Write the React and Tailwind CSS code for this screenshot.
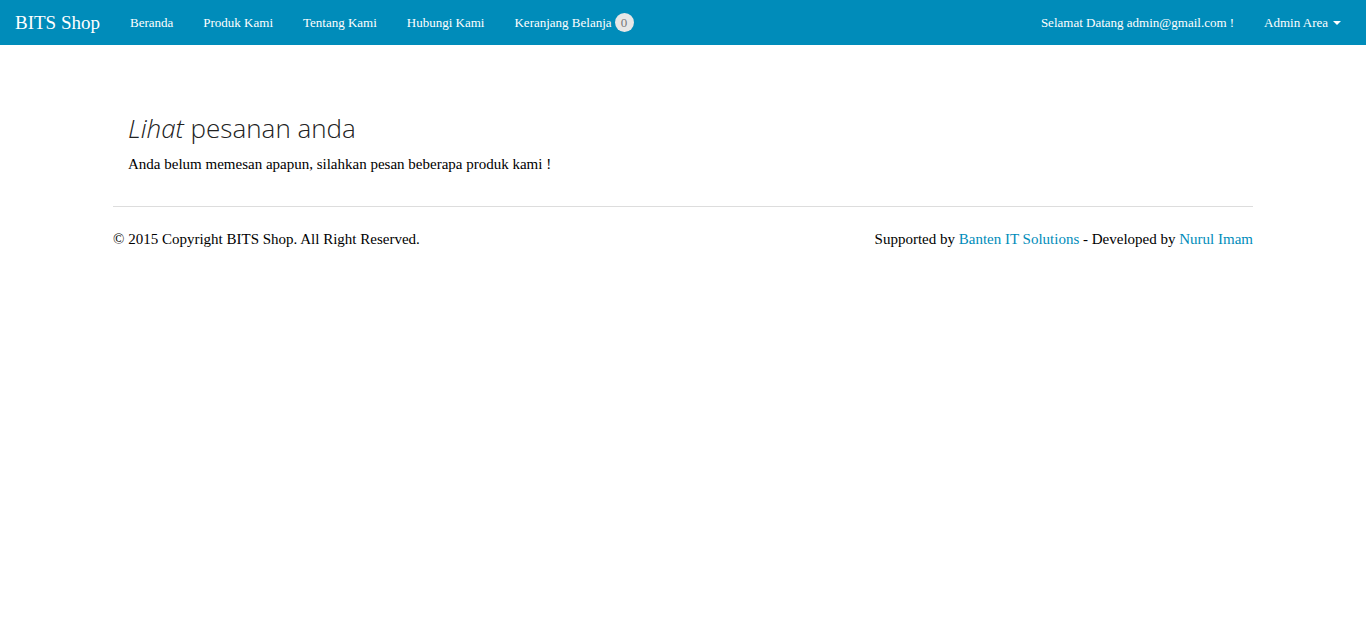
import React from 'react';

const navLinks = ['Beranda', 'Produk Kami', 'Tentang Kami', 'Hubungi Kami'];

function Navbar() {
  return (
    <nav className="h-[45px] bg-[#008cba] flex items-center justify-between text-white font-['Liberation_Serif',serif]">
      <div className="flex items-center h-full">
        <a href="#" className="px-[15px] text-[19px] leading-[45px]">BITS Shop</a>
        <ul className="flex items-center h-full">
          {navLinks.map((l) => (
            <li key={l}>
              <a href="#" className="px-[15px] text-[13px] leading-[45px]">{l}</a>
            </li>
          ))}
          <li className="px-[15px] flex items-center text-[13px]">
            <a href="#" className="leading-[45px]">Keranjang Belanja</a>
            <span className="ml-[3px] h-[19px] min-w-[19px] px-[5px] rounded-full bg-[#e7e7e7] text-[#777] text-[13px] leading-[19px] text-center">0</span>
          </li>
        </ul>
      </div>
      <ul className="flex items-center h-full text-[13px] pr-[10px]">
        <li className="px-[15px] leading-[45px]">Selamat Datang admin@gmail.com !</li>
        <li className="px-[15px] flex items-center gap-[5px] leading-[45px]">
          Admin Area
          <span className="w-0 h-0 border-x-[4px] border-x-transparent border-t-[4px] border-t-white mt-[1px]" />
        </li>
      </ul>
    </nav>
  );
}

export default function App() {
  return (
    <div className="min-h-screen bg-white font-['Liberation_Serif',serif] text-[#222]">
      <Navbar />
      <div className="w-[1170px] mx-auto px-[15px]">
        <div className="px-[15px] pt-[68px] pb-[32px]">
          <h3 className="font-['Open_Sans',sans-serif] font-light text-[26px] leading-[30px] text-[#222]">
            <i>Lihat</i> pesanan anda
          </h3>
          <p className="mt-[11px] text-[15px] leading-[20px] text-black">
            Anda belum memesan apapun, silahkan pesan beberapa produk kami !
          </p>
        </div>
        <hr className="border-t border-[#ddd]" />
        <footer className="flex justify-between pt-[22px] text-[15px] leading-[20px] text-black">
          <span>© 2015 Copyright BITS Shop. All Right Reserved.</span>
          <span>
            Supported by <a href="#" className="text-[#008cba]">Banten IT Solutions</a> - Developed by{' '}
            <a href="#" className="text-[#008cba]">Nurul Imam</a>
          </span>
        </footer>
      </div>
    </div>
  );
}
